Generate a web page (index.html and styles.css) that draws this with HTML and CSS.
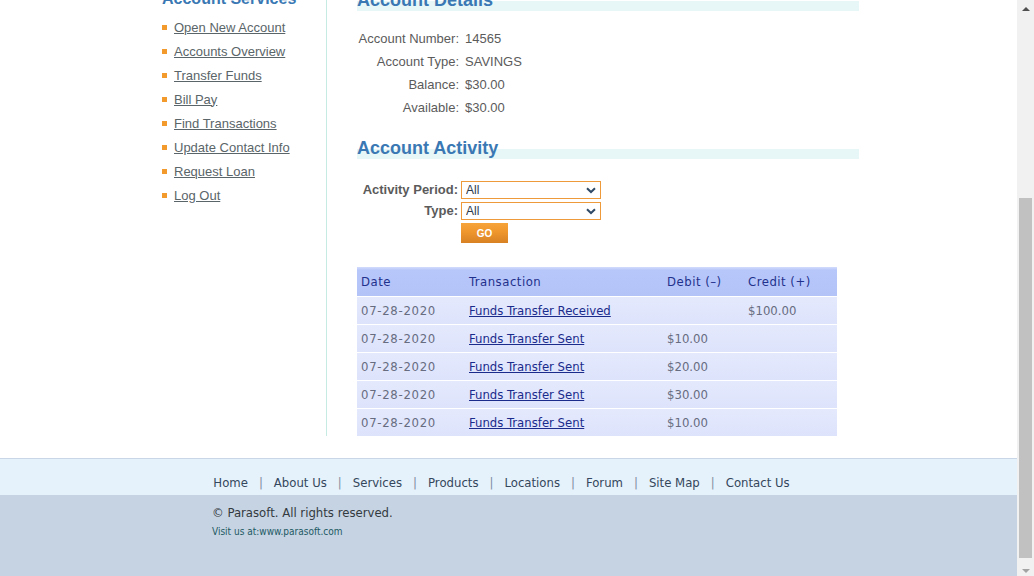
FILE: index.html
```html
<!DOCTYPE html>
<html lang="en">
<head>
<meta charset="utf-8">
<title>ParaBank | Activity</title>
<link rel="stylesheet" href="styles.css">
</head>
<body>
<div class="screen">
  <div class="viewport">
    <div class="page">
      <div class="main">
        <aside class="sidebar">
          <h2 class="title side-title">Account Services</h2>
          <ul class="services">
            <li><a href="#">Open New Account</a></li>
            <li><a href="#">Accounts Overview</a></li>
            <li><a href="#">Transfer Funds</a></li>
            <li><a href="#">Bill Pay</a></li>
            <li><a href="#">Find Transactions</a></li>
            <li><a href="#">Update Contact Info</a></li>
            <li><a href="#">Request Loan</a></li>
            <li><a href="#">Log Out</a></li>
          </ul>
        </aside>
        <section class="content">
          <h1 class="title band">Account Details</h1>
          <div class="details">
            <span class="label">Account Number:</span><span class="value">14565</span>
            <span class="label">Account Type:</span><span class="value">SAVINGS</span>
            <span class="label">Balance:</span><span class="value">$30.00</span>
            <span class="label">Available:</span><span class="value">$30.00</span>
          </div>
          <h1 class="title band activity-title">Account Activity</h1>
          <form class="activity-form">
            <label class="form-label">Activity Period:</label>
            <div class="select-wrap">
              <select class="select"><option>All</option></select>
              <svg class="chevron" width="10" height="7" viewBox="0 0 10 7"><path d="M1 1.2 L5 5 L9 1.2" fill="none" stroke="#2f4a66" stroke-width="2"/></svg>
            </div>
            <label class="form-label">Type:</label>
            <div class="select-wrap">
              <select class="select"><option>All</option></select>
              <svg class="chevron" width="10" height="7" viewBox="0 0 10 7"><path d="M1 1.2 L5 5 L9 1.2" fill="none" stroke="#2f4a66" stroke-width="2"/></svg>
            </div>
            <span></span>
            <div><button type="button" class="go">GO</button></div>
          </form>
          <table class="transactions">
            <thead>
              <tr><th class="c-date">Date</th><th class="c-tx">Transaction</th><th class="c-debit">Debit (–)</th><th class="c-credit">Credit (+)</th></tr>
            </thead>
            <tbody>
              <tr><td class="date">07-28-2020</td><td><a href="#">Funds Transfer Received</a></td><td></td><td>$100.00</td></tr>
              <tr><td class="date">07-28-2020</td><td><a href="#">Funds Transfer Sent</a></td><td>$10.00</td><td></td></tr>
              <tr><td class="date">07-28-2020</td><td><a href="#">Funds Transfer Sent</a></td><td>$20.00</td><td></td></tr>
              <tr><td class="date">07-28-2020</td><td><a href="#">Funds Transfer Sent</a></td><td>$30.00</td><td></td></tr>
              <tr><td class="date">07-28-2020</td><td><a href="#">Funds Transfer Sent</a></td><td>$10.00</td><td></td></tr>
            </tbody>
          </table>
        </section>
      </div>
      <footer class="footer">
        <div class="footer-nav">
          <ul class="footer-links">
            <li>Home</li>
            <li>About Us</li>
            <li>Services</li>
            <li>Products</li>
            <li>Locations</li>
            <li>Forum</li>
            <li>Site Map</li>
            <li>Contact Us</li>
          </ul>
        </div>
        <div class="footer-bottom">
          <div class="footer-inner">
            <p class="copyright">© Parasoft. All rights reserved.</p>
            <p class="visit">Visit us at:www.parasoft.com</p>
          </div>
        </div>
      </footer>
    </div>
  </div>
  <div class="scrollbar">
    <div class="sb-btn"><span class="arrow-up"></span></div>
    <div class="sb-track"><div class="sb-thumb"></div></div>
    <div class="sb-btn"><span class="arrow-down"></span></div>
  </div>
</div>
</body>
</html>
```

FILE: styles.css
```css
html, body {
  margin: 0;
  padding: 0;
  background: #ffffff;
}

.screen {
  display: flex;
  width: 1034px;
  height: 576px;
  overflow: hidden;
}

.viewport {
  flex: 1;
  overflow: hidden;
  height: 576px;
}

.page {
  margin-top: -11px;
}

.main {
  width: 697px;
  margin: 0 auto;
  padding-left: 4px;
  box-sizing: content-box;
  display: flex;
}

.title {
  margin: 0;
  font-family: "Liberation Sans", Arial, sans-serif;
  font-size: 18px;
  font-weight: bold;
  line-height: 22px;
  height: 22px;
  color: #3a78b4;
}

.side-title {
  font-size: 16px;
  line-height: 20px;
  height: 20px;
}

.band {
  background: linear-gradient(to bottom, transparent 0, transparent 12px, #e7f6f6 12px, #e7f6f6 22px);
}

.sidebar {
  width: 164px;
  border-right: 1px solid #c6ebe2;
  flex: none;
}

.services {
  list-style: none;
  margin: 6px 0 0;
  padding: 0;
}

.services li {
  display: flex;
  align-items: center;
  height: 24px;
  font-family: "Liberation Sans", Arial, sans-serif;
  font-size: 13px;
}

.services li::before {
  content: "";
  width: 5px;
  height: 5px;
  background: #f29a2c;
  margin-right: 7px;
  flex: none;
}

.services a {
  color: #5a6569;
  text-decoration: underline;
}

.content {
  padding-left: 30px;
  width: 502px;
}

.details {
  display: grid;
  grid-template-columns: 102px auto;
  column-gap: 6px;
  grid-auto-rows: 23px;
  align-items: center;
  margin-top: 16px;
  font-family: "Liberation Sans", Arial, sans-serif;
  font-size: 13px;
  color: #5b5b5b;
}

.details .label {
  text-align: right;
}

.activity-title {
  margin-top: 18px;
}

.activity-form {
  display: grid;
  grid-template-columns: 101px 140px;
  column-gap: 3px;
  row-gap: 3px;
  grid-template-rows: 18px 18px 20px;
  align-items: center;
  margin: 22px 0 0;
  font-family: "Liberation Sans", Arial, sans-serif;
  font-size: 13px;
}

.form-label {
  text-align: right;
  font-weight: bold;
  color: #5b5b5b;
  line-height: 16px;
}

.select-wrap {
  position: relative;
  height: 18px;
}

.select {
  appearance: none;
  -webkit-appearance: none;
  display: block;
  width: 140px;
  height: 18px;
  margin: 0;
  padding: 0 0 0 4px;
  border: 1px solid #ee9a3a;
  border-radius: 0;
  background: #ffffff;
  font-family: "Liberation Sans", Arial, sans-serif;
  font-size: 12px;
  color: #2e3a4a;
  box-sizing: border-box;
}

.chevron {
  position: absolute;
  right: 5px;
  top: 6px;
}

.go {
  display: block;
  width: 47px;
  height: 20px;
  margin: 0;
  padding: 0;
  border: none;
  background: linear-gradient(to bottom, #f6a43a 0%, #ef962c 45%, #d78124 100%);
  color: #ffffff;
  font-family: "Liberation Sans", Arial, sans-serif;
  font-size: 10px;
  font-weight: bold;
}

.transactions {
  margin-top: 24px;
  width: 480px;
  border-collapse: separate;
  border-spacing: 0;
  font-family: "DejaVu Sans Condensed", "DejaVu Sans", sans-serif;
  font-size: 13px;
  table-layout: fixed;
}

.transactions th {
  height: 29px;
  padding: 0 0 0 4px;
  text-align: left;
  font-weight: normal;
  letter-spacing: 0.5px;
  color: #1f318c;
  background: linear-gradient(to bottom, #d3dcfb 0, #b8c7fa 3px, #b3c3f8 100%);
  box-sizing: border-box;
}

.c-date { width: 108px; }
.c-tx { width: 198px; }
.c-debit { width: 81px; }
.c-credit { width: 93px; }

.transactions td {
  height: 28px;
  padding: 0 0 1px 4px;
  border-top: 1px solid #ffffff;
  background: linear-gradient(to bottom, #e4e9fd 0, #dde3fb 100%);
  color: #676c80;
  box-sizing: border-box;
}

.transactions td.date {
  letter-spacing: 0.7px;
}

.transactions a {
  color: #1a2b8c;
  text-decoration: underline;
}

.footer {
  margin-top: 22px;
  font-family: "DejaVu Sans Condensed", "DejaVu Sans", sans-serif;
}

.footer-nav {
  border-top: 1px solid #c9d6e6;
  background: #e5f1fb;
  height: 37px;
  box-sizing: border-box;
  padding-top: 15px;
}

.footer-links {
  list-style: none;
  margin: 0;
  padding: 0 14px 0 0;
  display: flex;
  justify-content: center;
  font-size: 13px;
  line-height: 18px;
  color: #34475c;
}

.footer-links li + li::before {
  content: "|";
  padding: 0 11px;
  color: #7f8da0;
}

.footer-bottom {
  background: #c6d3e3;
  height: 100px;
}

.footer-inner {
  width: 647px;
  margin: 0 auto;
  padding-left: 54px;
  padding-top: 9px;
}

.copyright {
  margin: 0;
  font-size: 13px;
  line-height: 18px;
  color: #333a40;
}

.visit {
  margin: 3px 0 0;
  font-size: 10px;
  line-height: 14px;
  color: #1d5a63;
}

.scrollbar {
  width: 17px;
  flex: none;
  background: #f1f1f1;
  display: flex;
  flex-direction: column;
}

.sb-btn {
  height: 17px;
  display: flex;
  align-items: center;
  justify-content: center;
  flex: none;
}

.arrow-up {
  width: 0;
  height: 0;
  border-left: 4px solid transparent;
  border-right: 4px solid transparent;
  border-bottom: 4px solid #505050;
}

.arrow-down {
  width: 0;
  height: 0;
  border-left: 4px solid transparent;
  border-right: 4px solid transparent;
  border-top: 4px solid #a3a3a3;
  margin-top: 6px;
}

.sb-track {
  flex: 1;
  padding: 0 2px;
}

.sb-thumb {
  margin-top: 181px;
  height: 360px;
  background: #c1c1c1;
}
```
